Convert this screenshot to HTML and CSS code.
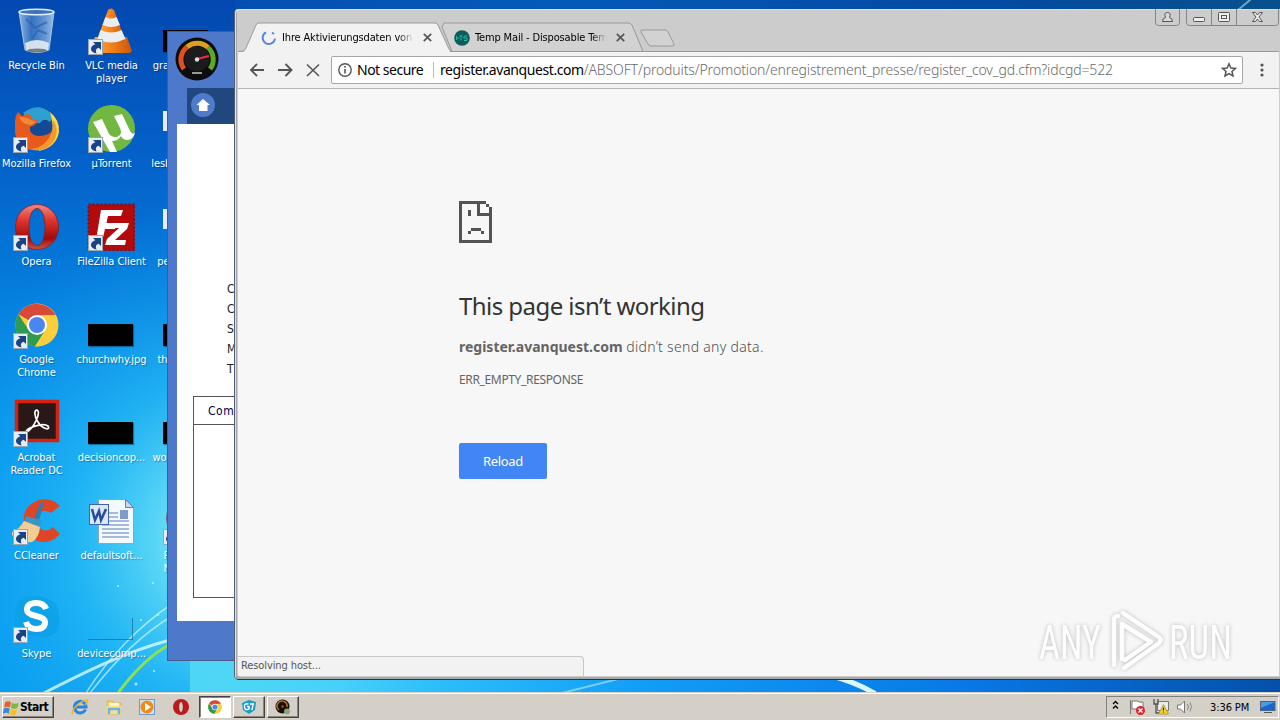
FILE: index.html
```
<!DOCTYPE html>
<html lang="en">
<head>
    <meta charset="UTF-8">
    <meta name="viewport" content="width=device-width, initial-scale=1.0">
    <title>Desktop</title>
    <link rel="stylesheet" href="styles.css">
</head>
<body>
    <!-- shared icon shapes -->
    <svg class="defs" width="0" height="0">
        <symbol id="shortcut" viewBox="0 0 15 16">
            <rect x=".5" y=".5" width="14" height="15" fill="#e6edf4" stroke="#9aa5ae"/>
            <path d="M5 3h8v8l-2.300-2.300Q6.500 10 8.500 14.500 2.500 13 3 9.500 3.500 6.500 7.300 5.300z" fill="#1c4286"/>
        </symbol>
        <symbol id="chrome" viewBox="0 0 44 44">
            <circle cx="22" cy="22" r="21.500" fill="#fbcf3c"/>
            <path d="M22 22 3.400 11.200A21.500 21.500 0 0 1 40.600 12L22 12.500z" fill="#d9493a"/>
            <path d="M3.400 11.200A21.500 21.500 0 0 0 20 43.500L30.500 27 22 31.500 13 26z" fill="#2e9b52"/>
            <path d="M22 12.500h18.600A21.500 21.500 0 0 1 20 43.500L30.500 27z" fill="#fbcf3c"/>
            <circle cx="22" cy="22" r="10" fill="#fff"/>
            <circle cx="22" cy="22" r="8" fill="#4a86ee"/>
        </symbol>
        <symbol id="opera" viewBox="0 0 44 46">
            <defs>
                <linearGradient id="operaRed" x1="0" y1="0" x2="0" y2="1">
                    <stop offset="0" stop-color="#f58a80"/>
                    <stop offset=".35" stop-color="#e0352c"/>
                    <stop offset=".75" stop-color="#a00a0c"/>
                    <stop offset="1" stop-color="#c8544a"/>
                </linearGradient>
            </defs>
            <path fill-rule="evenodd" fill="url(#operaRed)" stroke="#8f1416" stroke-width=".7" d="M22 .5C34 .5 43.500 10 43.500 23S34 45.500 22 45.500.5 36 .5 23 10 .5 22 .5zM22 4.500c-5 0-8 8-8 18.500S17 41.500 22 41.500s8-8 8-18.500S27 4.500 22 4.500z"/>
        </symbol>
        <symbol id="gauge" viewBox="0 0 44 44">
            <circle cx="22" cy="22" r="21.500" fill="#0c0c0c"/>
            <path d="M9 32A16 16 0 0 1 12 10" fill="none" stroke="#e0501c" stroke-width="5"/>
            <path d="M12 10A16 16 0 0 1 33 10.500" fill="none" stroke="#dfa01c" stroke-width="5"/>
            <path d="M33 10.500A16 16 0 0 1 35 32" fill="none" stroke="#5caa22" stroke-width="5"/>
            <circle cx="22" cy="22" r="12.500" fill="#1c1c1c"/>
            <path d="M22 22 34 19" stroke="#f02848" stroke-width="2.200"/>
            <circle cx="22" cy="22.500" r="2.200" fill="#ddd"/>
            <path d="M17 36h10" stroke="#999" stroke-width="2"/>
        </symbol>
    </svg>

    <div class="desktop">
        <svg class="wallpaper" viewBox="0 0 1280 692" preserveAspectRatio="none">
            <defs>
                <linearGradient id="sky" x1="0" y1="0" x2="0" y2="1">
                    <stop offset="0" stop-color="#0348b0"/>
                    <stop offset=".25" stop-color="#0464cc"/>
                    <stop offset=".5" stop-color="#0588e4"/>
                    <stop offset=".7" stop-color="#069af0"/>
                    <stop offset="1" stop-color="#049cf0"/>
                </linearGradient>
                <radialGradient id="glow" gradientUnits="userSpaceOnUse" cx="240" cy="540" r="340">
                    <stop offset="0" stop-color="#84f0f8"/>
                    <stop offset=".22" stop-color="#66def6" stop-opacity=".95"/>
                    <stop offset=".5" stop-color="#2cc0f6" stop-opacity=".65"/>
                    <stop offset="1" stop-color="#1498f0" stop-opacity="0"/>
                </radialGradient>
                <linearGradient id="strip" gradientUnits="userSpaceOnUse" x1="235" y1="0" x2="1280" y2="0">
                    <stop offset="0" stop-color="#4ed6f6"/>
                    <stop offset=".1" stop-color="#48d0fa"/>
                    <stop offset=".2" stop-color="#2cbcfa"/>
                    <stop offset=".4" stop-color="#129cf6"/>
                    <stop offset=".7" stop-color="#0878e6"/>
                    <stop offset="1" stop-color="#0450aa"/>
                </linearGradient>
                <linearGradient id="top" gradientUnits="userSpaceOnUse" x1="235" y1="0" x2="1280" y2="0">
                    <stop offset="0" stop-color="#0450b2"/>
                    <stop offset=".3" stop-color="#045ab8"/>
                    <stop offset=".7" stop-color="#034aa4"/>
                    <stop offset="1" stop-color="#08508c"/>
                </linearGradient>
            </defs>
            <rect width="1280" height="692" fill="url(#sky)"/>
            <rect width="700" height="692" fill="url(#glow)"/>
            <rect x="235" width="1045" height="20" fill="url(#top)"/>
            <path d="M190 661H1280V692H190z" fill="url(#strip)"/>
            <g fill="none" stroke="#d8faff" stroke-linecap="round">
                <path d="M44 693C85 672 125 652 170 640" stroke-width="3" stroke-opacity=".8"/>
                <path d="M86 693C108 658 140 625 172 604" stroke-width="1.500" stroke-opacity=".65"/>
                <path d="M90 693C114 662 142 634 172 616" stroke-width="1.500" stroke-opacity=".65"/>
                <path d="M118 693C132 674 148 656 172 643" stroke="#8ee052" stroke-width="3"/>
                <path d="M562 693 622 678M1238 10 1250 0" stroke-width="2" stroke-opacity=".5"/>
                <path d="M832 676Q855 682 874 693" stroke-width="5"/>
            </g>
            <g fill="#e8fdff" fill-opacity=".7">
                <circle cx="118" cy="586" r="1"/><circle cx="153" cy="583" r="1"/><circle cx="136" cy="684" r="1.500"/>
                <circle cx="154" cy="671" r="1"/><circle cx="141" cy="620" r="1"/><circle cx="158" cy="615" r="1"/>
            </g>
        </svg>

        <div class="icons">
            <div class="icon">
                <svg width="48" height="48" viewBox="0 0 48 48">
                    <defs>
                        <linearGradient id="bin" x1="0" y1="0" x2="1" y2="0">
                            <stop offset="0" stop-color="#a4c4e8"/><stop offset=".35" stop-color="#3f78c2"/>
                            <stop offset=".7" stop-color="#6c9cd6"/><stop offset="1" stop-color="#b4cfee"/>
                        </linearGradient>
                    </defs>
                    <path d="M7 5h35l-5 38q-12 5-24 0z" fill="url(#bin)" fill-opacity=".85" stroke="#a9c4e2"/>
                    <path d="M13 36q12-6 24 0l-1 7q-11 5-22 0z" fill="#e4ebf0" fill-opacity=".9"/>
                    <ellipse cx="24.500" cy="5" rx="17.500" ry="2.800" fill="#3c74bc" stroke="#e0eaf4" stroke-width="1.500"/>
                    <path d="m14 12 9 9 12-6M20 32l6-9 9 4" fill="none" stroke="#2a5ca8" stroke-opacity=".6" stroke-width="2"/>
                    <ellipse cx="25" cy="43.500" rx="10" ry="2" fill="#777f86"/>
                </svg>
                <span>Recycle Bin</span>
            </div>
            <div class="icon">
                <svg width="48" height="48" viewBox="0 0 48 48">
                    <defs><linearGradient id="cone" x1="0" y1="0" x2="1" y2="0"><stop offset="0" stop-color="#ffae44"/><stop offset=".5" stop-color="#f5811c"/><stop offset="1" stop-color="#c8560a"/></linearGradient></defs>
                    <path d="M8 30h32l5 14-2 2H4l-1-2z" fill="url(#cone)"/>
                    <path d="M21 3q3-3 6 0l11 30q-14 8-28 0z" fill="url(#cone)"/>
                    <path d="M18.500 10q5.500 3 11 0l3.500 8q-9 4-17.500 0zM13.500 23q10.500 5 21 0l4 9q-14.500 7-28 0z" fill="#e9eef0"/>
                </svg>
                <svg class="arrow" width="15" height="16"><use href="#shortcut"/></svg>
                <span>VLC media<br>player</span>
            </div>
            <div class="icon">
                <div class="thumb"></div>
                <span>graphicspot...</span>
            </div>

            <div class="icon">
                <svg width="48" height="48" viewBox="0 0 48 48">
                    <circle cx="26" cy="23" r="21" fill="#144a94"/>
                    <path d="M11 8Q25-3 38 7q4 6 0 10-6-5-10 1-10 2-17-10z" fill="#2f9fd0"/>
                    <path d="M38 7q10 8 9 20-3 16-21 19 11-7 14-17 2-8-2-22z" fill="#ffd84a"/>
                    <path d="M3 16q0-5 3-9l4 4q5-3 9-1l1 4 6 1q-1 5-8 7-1 8 8 9 9 0 13-4-1 10-8 14-7 5-15 3Q5 41 3 28z" fill="#e85a1c"/>
                    <path d="M17 44q14 0 21-13 4-8 3-17 7 12 1 22-9 13-25 8z" fill="#f59a28"/>
                    <path d="M7 12q8 0 12 3l5 2-5 3q-8 0-12-8z" fill="#f28a3a"/>
                </svg>
                <svg class="arrow" width="15" height="16"><use href="#shortcut"/></svg>
                <span>Mozilla Firefox</span>
            </div>
            <div class="icon">
                <svg width="48" height="48" viewBox="0 0 48 48">
                    <circle cx="24.500" cy="23.500" r="23.500" fill="#72b840"/>
                    <path d="M6 17 15 14 22 29q5 6 11 1 2-3 0-7l-6-12 8-2 8 17q2 4 5 2-2 7-8 7-4 0-6-4-3 5-9 5l5 11-7 0z" fill="#fff"/>
                </svg>
                <svg class="arrow" width="15" height="16"><use href="#shortcut"/></svg>
                <span>µTorrent</span>
            </div>
            <div class="icon">
                <div class="sheet"></div>
                <span>lesbasketbal...</span>
            </div>

            <div class="icon">
                <svg width="48" height="48" viewBox="0 0 48 48"><use href="#opera" x="3" y="1" width="44" height="46"/></svg>
                <svg class="arrow" width="15" height="16"><use href="#shortcut"/></svg>
                <span>Opera</span>
            </div>
            <div class="icon">
                <svg width="48" height="48" viewBox="0 0 48 48">
                    <rect x="1.500" y="1.500" width="46" height="46" fill="#b50a0c" stroke="#8c0608" stroke-width="2" stroke-dasharray="2 2"/>
                    <path d="M14 7h22l-2 6H21l-1.500 7h10l-1.500 6H18l-4 17H8zM25 20h17l-2 6-12 11h11l-1 5H18l2-6 12-11h-8z" fill="#fff"/>
                </svg>
                <svg class="arrow" width="15" height="16"><use href="#shortcut"/></svg>
                <span>FileZilla Client</span>
            </div>
            <div class="icon">
                <div class="sheet"></div>
                <span>performs.rtf</span>
            </div>

            <div class="icon">
                <svg width="48" height="48" viewBox="0 0 48 48"><use href="#chrome" x="3" y="2" width="44" height="44"/></svg>
                <svg class="arrow" width="15" height="16"><use href="#shortcut"/></svg>
                <span>Google<br>Chrome</span>
            </div>
            <div class="icon">
                <div class="thumb"></div>
                <span>churchwhy.jpg</span>
            </div>
            <div class="icon">
                <div class="thumb"></div>
                <span>thinking.jpg</span>
            </div>

            <div class="icon">
                <svg width="48" height="48" viewBox="0 0 48 48">
                    <rect x="4.500" y="2.500" width="41" height="39" fill="#2a1818" stroke="#d8200f" stroke-width="3.500"/>
                    <path d="M14 34c-1-5 17-11 22-7 3 5-6 3-10-4-4-6-4-12-1-12 4 2-2 17-11 23z" fill="none" stroke="#fff" stroke-width="1.700"/>
                </svg>
                <svg class="arrow" width="15" height="16"><use href="#shortcut"/></svg>
                <span>Acrobat<br>Reader DC</span>
            </div>
            <div class="icon">
                <div class="thumb"></div>
                <span>decisioncop...</span>
            </div>
            <div class="icon">
                <div class="thumb"></div>
                <span>wouldlogo.jpg</span>
            </div>

            <div class="icon">
                <svg width="48" height="48" viewBox="0 0 48 48">
                    <path d="M48 9Q40 0 27 3 10 9 12 25q3 18 18 20 10 1 18-8l-7-7q-6 6-12 2-6-4-4-12 5-10 14-4z" fill="#e04426"/>
                    <path d="m29 5 3 1-5 17-5-2z" fill="#2f7cae"/>
                    <path d="m14 19 16 5-3 6-15-5z" fill="#3c96c4"/>
                    <path d="m12 24 16 6q-1 11-8 15-12 2-22-9 9-3 14-12z" fill="#f3cd90"/>
                </svg>
                <svg class="arrow" width="15" height="16"><use href="#shortcut"/></svg>
                <span>CCleaner</span>
            </div>
            <div class="icon">
                <svg width="48" height="48" viewBox="0 0 48 48">
                    <path d="M11.500 2.500h27l8 8v36h-35z" fill="#f4f8ff" stroke="#8ba4cc"/>
                    <path d="M38.500 2.500v8h8z" fill="#cad8ee" stroke="#6080b4"/>
                    <path d="M22 16h9M22 20h9M22 24h20M15 28h27M15 32h27M15 36h27M15 40h27" stroke="#8aa4d0" stroke-width="1.300"/>
                    <rect x="33" y="13" width="8" height="9" fill="#7e9cca"/>
                    <rect x="2.500" y="7.500" width="19" height="20" fill="#dbe7fa" stroke="#3c64b0"/>
                    <path d="m5 12 3 11 4-9 2 9 5-11" fill="none" stroke="#274c9c" stroke-width="2.500"/>
                </svg>
                <span>defaultsoft...</span>
            </div>
            <div class="icon">
                <svg width="48" height="48" viewBox="0 0 48 48"><circle cx="25" cy="21" r="21" fill="#7a5a88"/></svg>
                <svg class="arrow" width="15" height="16"><use href="#shortcut"/></svg>
                <span class="wide">Program<br>Notepad</span>
            </div>

            <div class="icon">
                <svg width="48" height="48" viewBox="0 0 48 48">
                    <path d="M14 2q20-3 31 8 4 12 1 24-8 12-22 7Q2 42 3 22q0-16 11-20z" fill="#0c9fe4" fill-opacity=".7"/>
                    <path d="M34 14q-2-6-10-6-9 0-9 7 0 4 9 6t9 6q0 7-9 7-8 0-10-7" fill="none" stroke="#fff" stroke-width="6"/>
                </svg>
                <svg class="arrow" width="15" height="16"><use href="#shortcut"/></svg>
                <span>Skype</span>
            </div>
            <div class="icon">
                <div class="thumb clear"></div>
                <span>devicecomp...</span>
            </div>
        </div>

        <!-- driver tool behind the browser -->
        <div class="tool">
            <svg class="tool-logo" width="44" height="44"><use href="#gauge"/></svg>
            <div class="tool-nav">
                <svg width="24" height="24" viewBox="0 0 24 24">
                    <circle cx="12" cy="12" r="12" fill="#4e7ccb"/>
                    <path d="M12 6 5.500 12H8v6h8.500v-6H19z" fill="#fff"/>
                </svg>
            </div>
            <div class="tool-body">
                <ul>
                    <li>Computer</li>
                    <li>CPU</li>
                    <li>System</li>
                    <li>Memory</li>
                    <li>Type</li>
                </ul>
                <div class="tool-table"><div>Component</div></div>
            </div>
        </div>

        <div class="browser">
            <div class="tabstrip">
                <svg class="tab-shapes" width="450" height="31" viewBox="0 0 450 31">
                    <path d="M206 1H390Q393 1 394 3L405 29.500H214L204 5z" fill="#d2d2d2" stroke="#999"/>
                    <path d="M0 29.500H6L18 3Q19 1 21 1H197Q199 1 200 3L212 29.500V31H0z" fill="#f2f2f2"/>
                    <path d="M0 29.500H3Q7 29.500 8 26L18 3Q19 1 21 1H197Q199 1 200 3L211 27Q212 29.500 215 29.500H450" fill="none" stroke="#999"/>
                    <path d="M405 8H427Q429 8 430 10L436 22Q437 24 434 24H413Q411 24 410 22L403 10Q402 8 405 8z" fill="#d2d2d2" stroke="#999"/>
                </svg>
                <div class="tab">
                    <svg width="16" height="16" viewBox="0 0 16 16"><path d="M5 2.300A6.200 6.200 0 1 0 14 8.500M11 2.500A6.200 6.200 0 0 1 13 4.300" fill="none" stroke="#5086e0" stroke-width="1.900"/></svg>
                    <span>Ihre Aktivierungsdaten von</span>
                    <svg class="x" width="9" height="9" viewBox="0 0 9 9"><path d="m.8.8 7.400 7.400M8.200.8.8 8.200" stroke="#555" stroke-width="1.700"/></svg>
                </div>
                <div class="tab">
                    <svg width="16" height="16" viewBox="0 0 16 16">
                        <circle cx="8" cy="8" r="7.800" fill="#0d5b5c"/>
                        <path d="M2 8h3M2.500 6v4M7 5.500v5M5.500 6h3M13.500 6h-3l-1 2h3.500v2.500h-3" fill="none" stroke="#25b79a"/>
                    </svg>
                    <span>Temp Mail - Disposable Temp</span>
                    <svg class="x" width="9" height="9" viewBox="0 0 9 9"><path d="m.8.8 7.400 7.400M8.200.8.8 8.200" stroke="#555" stroke-width="1.700"/></svg>
                </div>
                <svg class="controls" width="125" height="18" viewBox="0 0 125 18" fill="none" stroke="#858585">
                    <path d="M1.500 0V13.500Q1.500 16.500 4.500 16.500H22.500Q25.500 16.500 25.500 13.500V0M32.500 0V13.500Q32.500 16.500 35.500 16.500H121.500Q124.500 16.500 124.500 13.500V0M57.500 0V16.500M82.500 0V16.500"/>
                    <g stroke="#555" fill="#eee">
                        <path d="M8.500 12.500Q8.500 9 11.500 8.500 9.500 3.500 13.500 3.500T15.500 8.500Q18.500 9 18.500 12.500z" fill="#d8d8d8"/>
                        <rect x="39.500" y="8.500" width="11" height="4" rx="1"/>
                        <rect x="64.500" y="3.500" width="11" height="9" rx="1"/>
                        <rect x="67.500" y="6.500" width="5" height="3"/>
                        <path d="M98.500 3.500h3l2 2.500 2-2.500h3l-3.500 4.500 3.500 4.500h-3l-2-2.500-2 2.500h-3L102 8z"/>
                    </g>
                </svg>
            </div>
            <div class="toolbar">
                <svg width="94" height="36" viewBox="0 0 94 36" fill="none" stroke="#555" stroke-width="1.900">
                    <path d="M26 18H13.500M19 12l-6 6 6 6"/>
                    <path d="M40 18h13M47.500 12l6 6-6 6"/>
                    <path d="m69 12.500 12 11.500M81 12.500 69 24" stroke-width="1.600"/>
                </svg>
                <div class="omnibox">
                    <svg width="14" height="14" viewBox="0 0 14 14"><circle cx="7" cy="7" r="6.200" fill="none" stroke="#555" stroke-width="1.400"/><path d="M7 6v4.500M7 3v1.700" stroke="#555" stroke-width="1.600"/></svg>
                    <span class="insecure">Not secure</span>
                    <span class="host">register.avanquest.com</span><span class="path">/ABSOFT/produits/Promotion/enregistrement_presse/register_cov_gd.cfm?idcgd=522</span>
                    <svg class="star" width="16" height="16" viewBox="0 0 16 16"><path d="M8 1.800 9.900 6l4.500.4L11 9.400l1 4.500-4-2.400-4 2.400 1-4.500-3.400-3L6.100 6z" fill="none" stroke="#555" stroke-width="1.500"/></svg>
                </div>
                <svg class="menu" width="4" height="14" viewBox="0 0 4 14" fill="#555"><circle cx="2" cy="2" r="1.600"/><circle cx="2" cy="7" r="1.600"/><circle cx="2" cy="12" r="1.600"/></svg>
            </div>
            <div class="page">
                <svg class="sad" width="33" height="42" viewBox="0 0 33 42" shape-rendering="crispEdges" fill="#535353">
                    <path d="M0 0h27v3H3v36h27V15H18V3h3v9h9V6h3v36H0z"/>
                    <path d="M27 3h3v3h-3zM9 9h3v6H9zM12 27h10v3H12zM9 30h3v3H9zM22 30h3v3h-3z"/>
                </svg>
                <h1>This page isn’t working</h1>
                <p><strong>register.avanquest.com</strong> <span>didn’t send any data.</span></p>
                <div class="code">ERR_EMPTY_RESPONSE</div>
                <button type="button">Reload</button>
                <div class="status">Resolving host...</div>
            </div>
        </div>

        <svg class="watermark" width="220" height="80" viewBox="0 0 220 80">
            <g class="wm-text">
                <text x="9" y="53" textLength="62" lengthAdjust="spacingAndGlyphs">ANY</text>
                <text x="139" y="53" textLength="63" lengthAdjust="spacingAndGlyphs">RUN</text>
            </g>
            <path d="M92 53V18L121 36 95 54M84 59V14Q84 10 88 10M93 7 129 31Q132 34 129 37L94 62" fill="none" stroke="#fff" stroke-width="4.500" stroke-linejoin="round" stroke-linecap="round"/>
        </svg>
    </div>

    <div class="taskbar">
        <div class="start">
            <svg width="17" height="17" viewBox="0 0 16 16">
                <path d="M2 3q3-2 5.500 0L6.500 8Q4 6.500 1 8z" fill="#e8602c"/>
                <path d="M8.300 3.500q3 2 6.500 0L13.500 8.500q-3 1.500-6 0z" fill="#7cb83a"/>
                <path d="M.8 9q3-1.500 5.500 0l-1 5q-2-2-5.500 0z" fill="#3c86d8"/>
                <path d="M7.300 9.300q3 2 6 0l-1 5q-3 2-6 0z" fill="#f5c02c"/>
            </svg>
            <span>Start</span>
        </div>
        <div class="quick">
            <svg width="18" height="18" viewBox="0 0 18 18">
                <path d="M14.500 11.500A5.800 5.800 0 1 1 15 9H5" fill="none" stroke="#2a86dc" stroke-width="3"/>
                <path d="M1.500 16Q0 13 6 7.500T16.500 2Q17.500 4 14 7" fill="none" stroke="#ecb62c" stroke-width="1.500"/>
            </svg>
            <svg width="18" height="18" viewBox="0 0 18 18">
                <path d="M2 3h6l1 2h7v11H2z" fill="#f2cf6c" stroke="#d8ac40" stroke-width=".7"/>
                <path d="M4 5h10v3H4z" fill="#fff6c8"/>
                <path d="M1.500 8h15v8h-15z" fill="#f8de8c"/>
                <path d="M4 16v-5h10v5" fill="none" stroke="#6cb4e4" stroke-width="2.500"/>
            </svg>
            <svg width="18" height="18" viewBox="0 0 18 18">
                <rect x="1.500" y="1.500" width="15" height="15" fill="#cbdff2" stroke="#6c9cd0"/>
                <circle cx="9" cy="9" r="6.500" fill="#f28a18"/>
                <path d="m7 5 6 4-6 4z" fill="#fff"/>
            </svg>
            <svg width="18" height="18" viewBox="0 0 18 18"><circle cx="9" cy="9" r="8" fill="#c0181c"/><ellipse cx="9" cy="9" rx="2.300" ry="5.500" fill="#d6d2ca" stroke="#801012" stroke-width=".8"/></svg>
        </div>
        <div class="task active"><svg width="14" height="14"><use href="#chrome"/></svg></div>
        <div class="task">
            <svg width="16" height="16" viewBox="0 0 16 16"><path d="M1 4 8 1l7 2-1 8-6 4-6-4z" fill="#1c9cc6"/><path d="M7.500 5Q3 4 3.500 8t4.500 2V7.500H6M9 5h4M12 5l-1 6" fill="none" stroke="#fff" stroke-width="1.400"/></svg>
        </div>
        <div class="task">
            <svg width="16" height="16" viewBox="0 0 16 16">
                <circle cx="7.500" cy="7.500" r="7" fill="#181008"/>
                <path d="M4 11A5 5 0 1 1 12 8" fill="none" stroke="#b8741c" stroke-width="1.500"/>
                <circle cx="7.500" cy="7.500" r="1.200" fill="#c04040"/>
                <circle cx="12" cy="12.500" r="3" fill="#8aa87c"/>
            </svg>
        </div>
        <div class="tray">
            <svg width="80" height="18" viewBox="0 0 80 18">
                <path d="m1 6 2.500-2.500L6 6M1 10.500 3.500 8 6 10.500" fill="none" stroke="#000" stroke-width="1.300"/>
                <path d="M18.500 2v14M20 3h5q3 2 6 1v7H20z" fill="#fff" stroke="#777"/>
                <circle cx="28.500" cy="12.500" r="4.500" fill="#d8242c"/><path d="m26.500 10.500 4 4M30.500 10.500l-4 4" stroke="#fff" stroke-width="1.300"/>
                <path d="M45.500 3.500h11v9h-11z" fill="#e8ecf0" stroke="#777"/><path d="M42 1v5h4V1M44 6v9H48" fill="none" stroke="#555" stroke-width="1.300"/>
                <path d="m51.500 6.500 5 9.500h-10z" fill="#f8d420" stroke="#a88c10" stroke-width=".7"/><path d="M51.500 9.500v3M51.500 13.500v1" stroke="#222" stroke-width="1.200"/>
                <path d="M65.500 7h3l4-4v12l-4-4h-3z" fill="#fff" stroke="#777"/><path d="M75.500 6q2 3 0 6M78 4.500q3 4 0 9" fill="none" stroke="#888"/>
            </svg>
            <span>3:36 PM</span>
            <svg class="show" width="16" height="14" viewBox="0 0 16 14"><rect x=".5" y="1.500" width="14.500" height="9" fill="#1866c8" stroke="#4a6484"/><path d="M1 2h14L1 8z" fill="#4c98e4"/><path d="M4 12.500h8" stroke="#555"/></svg>
        </div>
    </div>
</body>
</html>
```
FILE: styles.css
```
*{
    margin: 0;
    padding: 0;
    box-sizing: border-box;
}
html, body{
    width: 1280px;
    height: 720px;
    overflow: hidden;
}
body{
    display: flex;
    flex-direction: column;
    font-family: "DejaVu Sans Condensed", "DejaVu Sans", sans-serif;
    font-stretch: condensed;
    font-size: 11px;
    color: #000;
}
.defs{
    position: absolute;
}
.desktop{
    position: relative;
    height: 692px;
    overflow: hidden;
}
.wallpaper{
    position: absolute;
    width: 100%;
    height: 100%;
}

/* desktop icons */
.icons{
    position: relative;
    display: grid;
    grid-template-columns: repeat(3, 75px);
    grid-auto-rows: 98px;
    margin-left: -2px;
    padding-top: 7px;
}
.icon{
    position: relative;
    display: flex;
    flex-direction: column;
    align-items: center;
    gap: 4px;
    color: #fff;
    line-height: 13px;
    text-align: center;
    white-space: nowrap;
    letter-spacing: -0.05px;
    text-shadow: 1px 1px 1px rgba(0, 30, 80, 0.4);
}
.icon span{
    padding-left: 2px;
}
.icon .arrow{
    position: absolute;
    left: 15px;
    top: 32px;
}
.icon .wide{
    padding-left: 0;
    letter-spacing: 0.3px;
}
.thumb{
    width: 45px;
    height: 22px;
    margin: 23px 0 3px;
    background: #000;
    box-shadow: 1px 1px 1px rgba(0, 50, 90, 0.5);
}
.thumb.clear{
    background: none;
    border: solid rgba(20, 90, 120, 0.6);
    border-width: 0 1px 1px 0;
    box-shadow: none;
}
.sheet{
    width: 45px;
    height: 20px;
    margin: 6px 0 22px;
    background: #e6ecff;
}

/* driver tool window */
.tool{
    position: absolute;
    left: 167px;
    top: 31px;
    width: 300px;
    height: 630px;
    padding: 5px 0 0 7px;
    background: #4e78ca;
    border: 1px solid #4a5a86;
}
.tool-logo{
    display: block;
}
.tool-nav{
    height: 36px;
    margin: 7px 0 0 12px;
    padding: 5px 4px;
    background: #20487e;
}
.tool-body{
    height: 497px;
    margin-left: 2px;
    padding: 155px 0 0 16px;
    background: #fff;
}
.tool-body ul{
    list-style: none;
    padding-left: 34px;
    font-size: 12px;
    line-height: 20px;
    letter-spacing: 2px;
    color: #222;
}
.tool-table{
    height: 202px;
    margin-top: 17px;
    border: 1px solid #555;
}
.tool-table div{
    height: 28px;
    padding-left: 14px;
    border-bottom: 1px solid #555;
    font-size: 12px;
    line-height: 28px;
    letter-spacing: 0.5px;
    color: #000050;
}

/* browser window */
.browser{
    position: absolute;
    left: 235px;
    top: 9px;
    width: 1045px;
    height: 670px;
    display: flex;
    flex-direction: column;
    padding: 0 1px 3px 3px;
    background: #ccc;
    border-radius: 4px 0 0 4px;
    box-shadow: inset 1px 1px 0 #e0e0e0, inset 2px -2px 0 #a8a8a8, 0 1px 0 #333, -1px 0 0 #50607a;
}
.tabstrip{
    position: relative;
    display: flex;
    height: 43px;
    padding: 20px 0 0 23px;
    border-bottom: 1px solid #999;
}
.tab-shapes{
    position: absolute;
    left: 0;
    top: 13px;
}
.tab{
    position: relative;
    display: flex;
    align-items: center;
    width: 193px;
    height: 17px;
}
.tab span{
    width: 132px;
    margin: 0 9px 0 5px;
    overflow: hidden;
    white-space: nowrap;
    line-height: 17px;
    letter-spacing: -0.15px;
    -webkit-mask-image: linear-gradient(90deg, #000 88%, transparent);
    mask-image: linear-gradient(90deg, #000 88%, transparent);
}
.controls{
    position: absolute;
    right: 0;
    top: 0;
}
.toolbar{
    display: flex;
    align-items: center;
    height: 37px;
    background: #f2f2f2;
    border-bottom: 1px solid #b4b4b4;
}
.toolbar>svg:first-child{
    margin-right: -1px;
}
.omnibox{
    display: flex;
    align-items: center;
    width: 912px;
    height: 28px;
    padding: 0 5px 0 6px;
    background: #fff;
    border: 1px solid #a8a8a8;
    border-radius: 2px;
    font-family: "Noto Sans", sans-serif;
    font-size: 14px;
    white-space: nowrap;
}
.insecure{
    width: 77px;
    height: 16px;
    line-height: 16px;
    margin: 0 6px 0 5px;
    border-right: 1px solid #bbb;
    letter-spacing: -0.5px;
}
.host, .path{
    line-height: 16px;
}
.host{
    letter-spacing: -0.42px;
}
.path{
    color: #6a6a6a;
    font-weight: 300;
    letter-spacing: -0.14px;
}
.star{
    margin-left: auto;
}
.menu{
    margin-left: 17px;
}
.page{
    position: relative;
    flex: 1;
    padding: 112px 0 0 221px;
    background: #f7f7f7;
    font-family: "Noto Sans", sans-serif;
    color: #646464;
}
.sad{
    display: block;
}
.page h1{
    margin-top: 46px;
    font-size: 24px;
    font-weight: 400;
    line-height: 34px;
    letter-spacing: -0.55px;
    color: #333;
}
.page p{
    margin-top: 14px;
    font-size: 14px;
    line-height: 20px;
}
.page p span{
    font-weight: 300;
    letter-spacing: 0.3px;
    color: #505050;
}
.page .code{
    margin-top: 15px;
    font-size: 12px;
    line-height: 16px;
    letter-spacing: -0.35px;
}
.page button{
    display: block;
    width: 88px;
    height: 36px;
    margin-top: 55px;
    border: 0;
    border-radius: 2px;
    background: #4285f4;
    color: #fff;
    font-family: inherit;
    font-size: 13px;
    letter-spacing: -0.3px;
}
.status{
    position: absolute;
    left: 0;
    bottom: 0;
    width: 346px;
    height: 20px;
    padding-left: 3px;
    background: #f2f2f2;
    border: 1px solid #c8c8c8;
    border-width: 1px 1px 0 0;
    border-radius: 0 4px 0 0;
    font-family: "DejaVu Sans Condensed", "DejaVu Sans", sans-serif;
    font-size: 11px;
    line-height: 18px;
    letter-spacing: -0.1px;
    color: #555;
}
.watermark{
    position: absolute;
    left: 1030px;
    top: 606px;
    filter: drop-shadow(0 0 2px rgba(0, 0, 0, 0.3));
    opacity: 0.8;
}
.wm-text{
    fill: #fff;
    font-family: "Roboto", sans-serif;
    font-size: 49px;
}

/* taskbar */
.taskbar{
    display: flex;
    align-items: center;
    height: 28px;
    padding: 2px 1px 0 2px;
    background: #d4cfc7;
    box-shadow: inset 0 1px 0 #d4cfc7, inset 0 2px 0 #fff;
}
.start, .task{
    display: flex;
    align-items: center;
    height: 22px;
    border: 1px solid;
    border-color: #fff #444 #444 #fff;
    box-shadow: inset -1px -1px 0 #8a867e;
}
.start{
    width: 52px;
    font-weight: bold;
    font-size: 12px;
    letter-spacing: -0.5px;
}
.quick{
    display: flex;
    gap: 15.5px;
    margin: 0 9.5px 0 17px;
}
.task{
    justify-content: center;
    width: 32px;
    margin-right: 2px;
}
.task.active{
    background: #fff;
    border-color: #444 #fff #fff #444;
    box-shadow: inset 1px 1px 0 #8a867e;
}
.tray{
    display: flex;
    align-items: center;
    width: 173px;
    height: 22px;
    margin-left: auto;
    padding-left: 5px;
    border: 1px solid;
    border-color: #808080 #fff #fff #808080;
}
.tray span{
    margin-left: 18px;
    white-space: nowrap;
    letter-spacing: -0.1px;
}
.show{
    margin-left: auto;
    margin-right: 2px;
}
```
